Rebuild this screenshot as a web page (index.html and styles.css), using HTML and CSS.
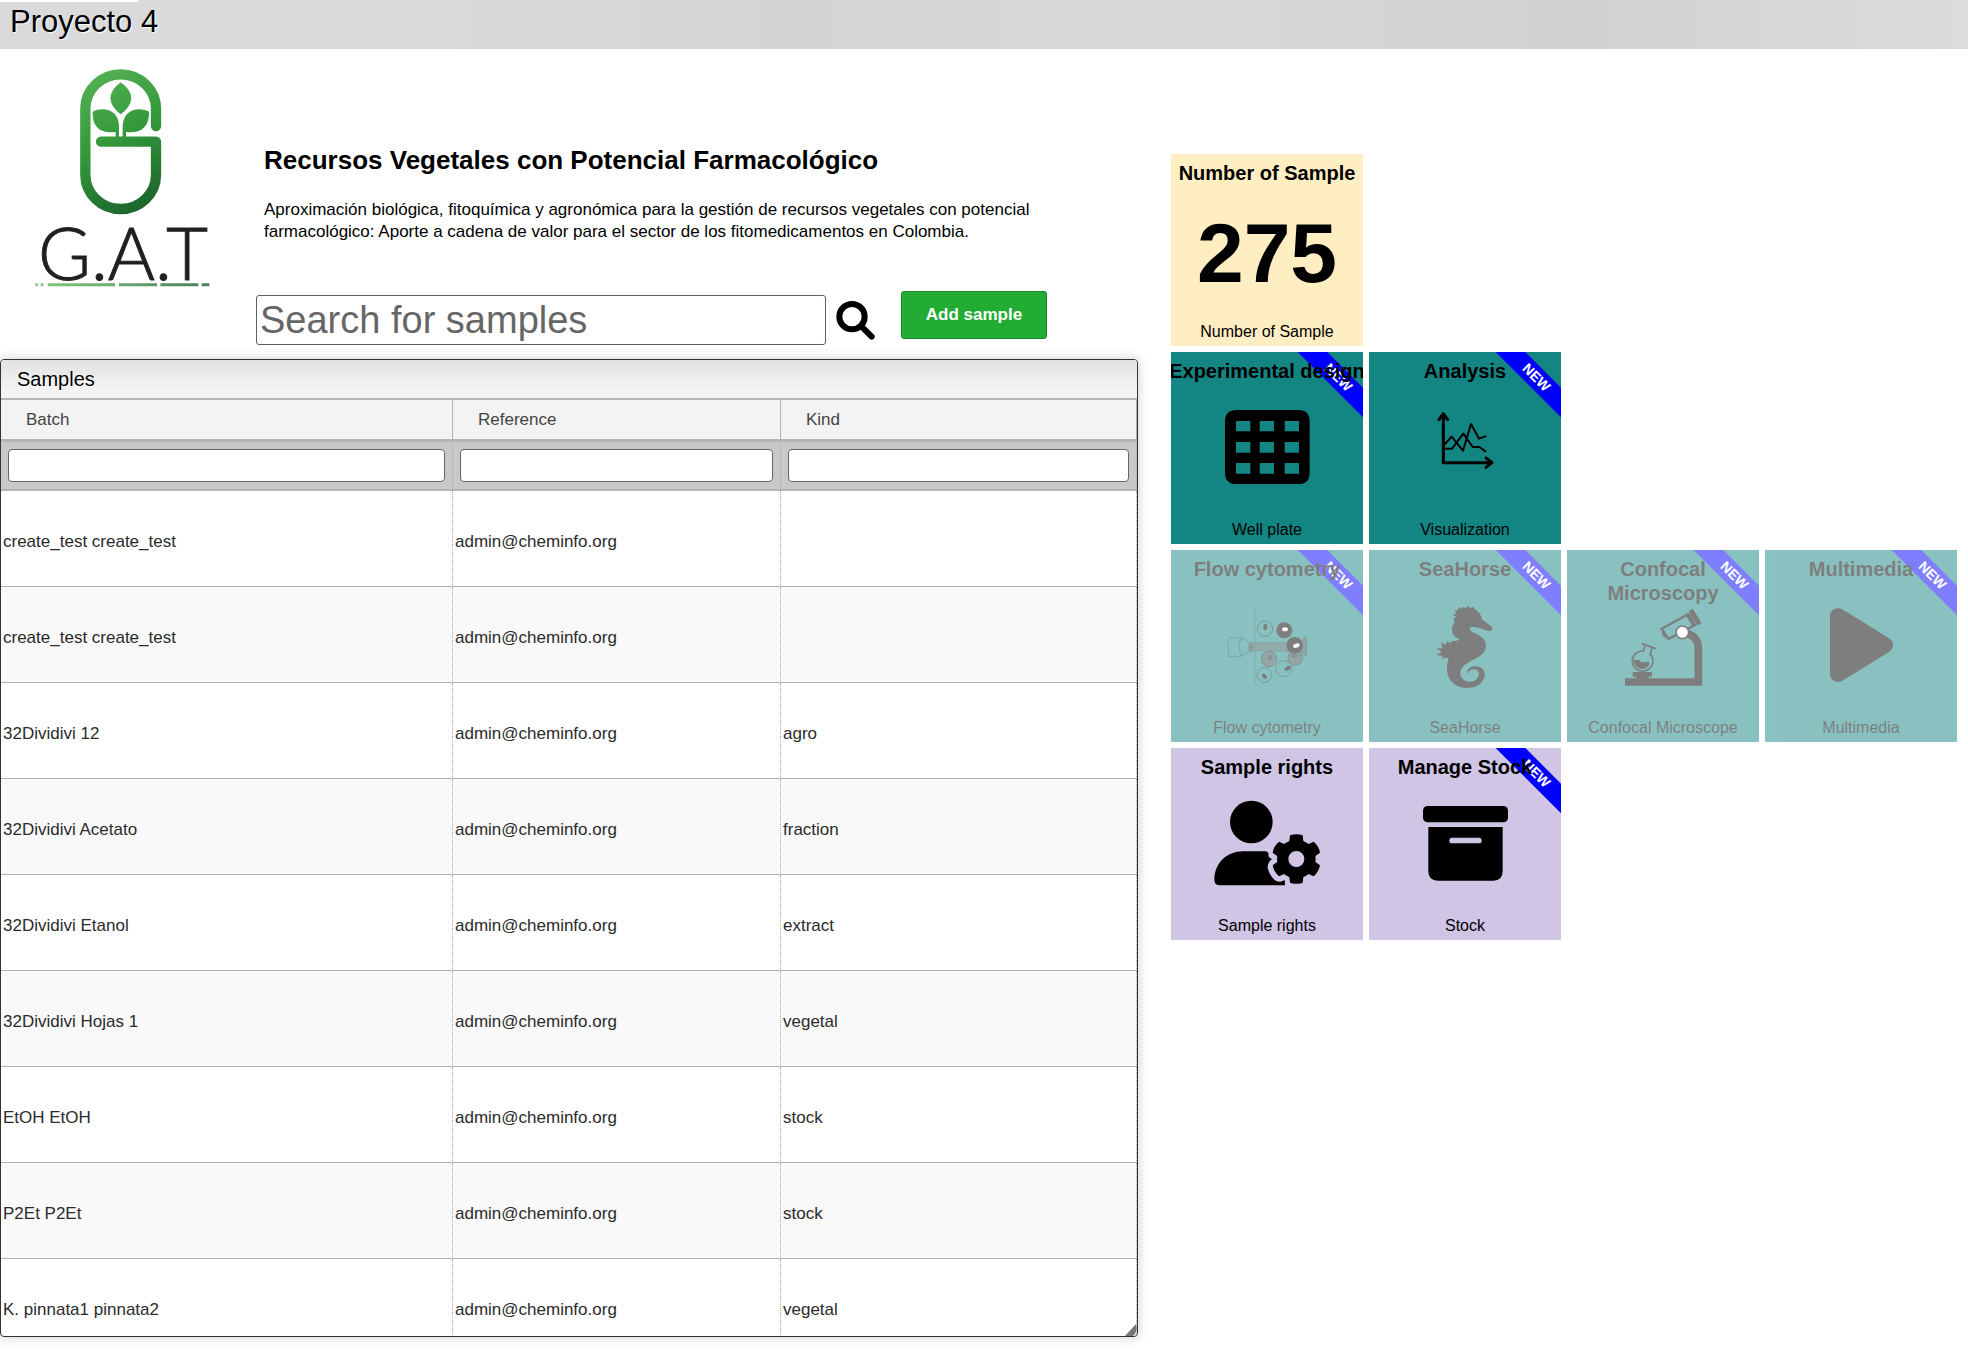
FILE: index.html
```html
<!DOCTYPE html>
<html lang="es">
<head>
<meta charset="utf-8">
<meta name="viewport" content="width=device-width, initial-scale=1">
<title>Proyecto 4</title>
<link rel="stylesheet" href="styles.css">
</head>
<body>
<header class="topbar">Proyecto 4</header>
<main class="page">
  <div class="left">
    <section class="intro">
      <svg class="logo" viewBox="0 0 600 750" role="img" aria-label="G.A.T">
        <defs>
          <linearGradient id="pill" gradientUnits="userSpaceOnUse" x1="190" y1="90" x2="400" y2="480">
            <stop offset="0" stop-color="#54b054"/><stop offset=".45" stop-color="#33993b"/><stop offset="1" stop-color="#1b602b"/>
          </linearGradient>
          <linearGradient id="rule" gradientUnits="userSpaceOnUse" x1="45" y1="704" x2="568" y2="704">
            <stop offset="0" stop-color="#86cb80"/><stop offset="1" stop-color="#4b8058"/>
          </linearGradient>
        </defs>
        <path d="M408 228V176A106 103 0 0 0 196 176V374A106 103 0 0 0 408 374V275H243" fill="none" stroke="url(#pill)" stroke-width="31" stroke-linecap="round" stroke-linejoin="round"/>
        <g fill="url(#pill)">
          <path d="M302 97Q333 119 334 145Q332 171 302 193Q273 171 271 145Q272 119 302 97Z"/>
          <path d="M218 185C250 169 296 178 297 228V262H287V246C240 251 216 230 218 185Z"/>
          <path d="M387 185C355 169 310 178 308 228V262H318V246C363 251 389 230 387 185Z"/>
        </g>
        <text class="logo-text" x="54" y="690">G.A.T</text>
        <path d="M46 704h8M62 704h8M83 704H285M297 704H411M421 704H535M545 704H568" stroke="url(#rule)" stroke-width="9"/>
      </svg>
      <div class="intro-body">
        <h1 class="intro-title">Recursos Vegetales con Potencial Farmacológico</h1>
        <p class="intro-text">Aproximación biológica, fitoquímica y agronómica para la gestión de recursos vegetales con potencial<br>farmacológico: Aporte a cadena de valor para el sector de los fitomedicamentos en Colombia.</p>
        <form class="search">
          <div class="search-group">
            <input class="search-input" type="search" placeholder="Search for samples" aria-label="Search for samples">
            <button class="search-button" type="button" aria-label="Search">
              <svg viewBox="48 57 117 117" width="39" height="39" fill="none" stroke="#000"><circle cx="96" cy="104" r="38" stroke-width="18"/><path d="M124 133L155 164" stroke-width="18" stroke-linecap="round"/></svg>
            </button>
          </div>
          <button class="add-button" type="button">Add sample</button>
        </form>
      </div>
    </section>

    <section class="panel">
      <h2 class="panel-title">Samples</h2>
      <div class="panel-body">
        <table class="samples">
          <colgroup><col class="col-batch"><col class="col-reference"><col></colgroup>
          <thead>
            <tr><th scope="col">Batch</th><th scope="col">Reference</th><th scope="col">Kind</th></tr>
            <tr class="filters">
              <td><input type="text" aria-label="Filter batch"></td>
              <td><input type="text" aria-label="Filter reference"></td>
              <td><input type="text" aria-label="Filter kind"></td>
            </tr>
          </thead>
          <tbody>
            <tr><td>create_test create_test</td><td>admin@cheminfo.org</td><td></td></tr>
            <tr><td>create_test create_test</td><td>admin@cheminfo.org</td><td></td></tr>
            <tr><td>32Dividivi 12</td><td>admin@cheminfo.org</td><td>agro</td></tr>
            <tr><td>32Dividivi Acetato</td><td>admin@cheminfo.org</td><td>fraction</td></tr>
            <tr><td>32Dividivi Etanol</td><td>admin@cheminfo.org</td><td>extract</td></tr>
            <tr><td>32Dividivi Hojas 1</td><td>admin@cheminfo.org</td><td>vegetal</td></tr>
            <tr><td>EtOH EtOH</td><td>admin@cheminfo.org</td><td>stock</td></tr>
            <tr><td>P2Et P2Et</td><td>admin@cheminfo.org</td><td>stock</td></tr>
            <tr><td>K. pinnata1 pinnata2</td><td>admin@cheminfo.org</td><td>vegetal</td></tr>
          </tbody>
        </table>
      </div>
      <svg class="grip" viewBox="0 0 12 12" width="12" height="12" aria-hidden="true"><path d="M0 12L11 0Q13 8 8 12Z" fill="#777"/></svg>
    </section>
  </div>

  <nav class="tiles" aria-label="Tools">
    <a class="tile tile-count row-start" href="#samples">
      <span class="tile-title">Number of Sample</span>
      <span class="tile-value">275</span>
      <span class="tile-footer">Number of Sample</span>
    </a>
    <a class="tile tile-tool row-start" href="#wellplate">
      <span class="ribbon">NEW</span>
      <span class="tile-title">Experimental design</span>
      <svg class="tile-icon" viewBox="141 801 360 246" aria-hidden="true"><path fill-rule="evenodd" d="M230 810H415Q449 810 449 844V998Q449 1032 415 1032H230Q195 1032 195 998V844Q195 810 230 810ZM228 843V874H271V843ZM299 843V874H342V843ZM374 843V874H417V843ZM228 906V938H271V906ZM299 906V938H342V906ZM374 906V938H417V906ZM228 969V1001H271V969ZM299 969V1001H342V969ZM374 969V1001H417V969Z"/></svg>
      <span class="tile-footer">Well plate</span>
    </a>
    <a class="tile tile-tool" href="#visualization">
      <span class="ribbon">NEW</span>
      <span class="tile-title">Analysis</span>
      <svg class="tile-icon" viewBox="735 801 360 246" fill="none" stroke="#000" stroke-linecap="round" stroke-linejoin="round" aria-hidden="true"><path stroke-width="9" d="M850 824V968H992M837 839L850 821L863 839M978 954L996 968L978 982"/><path stroke-width="6" d="M852 915L875 890L909 932L933 852L957 896L976 889M852 926H876L910 881L938 921H958L976 934"/></svg>
      <span class="tile-footer">Visualization</span>
    </a>
    <a class="tile tile-tool is-disabled row-start" href="#flow">
      <span class="ribbon">NEW</span>
      <span class="tile-title">Flow cytometry</span>
      <svg class="tile-icon" viewBox="141 195 360 246" fill="none" stroke="#000" aria-hidden="true">
        <path d="M285 204V435" stroke-width="6" stroke="#1e6e6c" opacity=".9"/>
        <path d="M272 309H430V333H272Z" fill="#2f4c4b" fill-opacity=".75" stroke-width="2" stroke-opacity=".5"/>
        <g stroke-width="3" stroke-opacity=".45"><path d="M207 293H242Q233 320 242 349H207Q200 320 207 293ZM242 293L272 310M242 349L272 333"/><ellipse cx="272" cy="321" rx="6" ry="12"/><ellipse cx="272" cy="321" rx="2" ry="5"/></g>
        <path d="M421 307L437 290Q443 320 438 346L423 335Z" fill="#25504f" stroke-opacity=".5" stroke-width="3"/>
        <g stroke-width="3" stroke-opacity=".6"><circle cx="315" cy="266" r="23"/><circle cx="313" cy="405" r="22"/><circle cx="371" cy="386" r="24"/><circle cx="327" cy="357" r="23" fill="#28504f"/><circle cx="406" cy="354" r="22" fill="#28504f"/></g>
        <g fill="#000" stroke="none"><ellipse cx="316" cy="261" rx="6" ry="10"/><ellipse cx="313" cy="409" rx="6" ry="9" transform="rotate(-40 313 409)"/><ellipse cx="383" cy="385" rx="6" ry="10" transform="rotate(55 383 385)"/><ellipse cx="330" cy="353" rx="6" ry="9" opacity=".5" transform="rotate(25 330 353)"/><ellipse cx="403" cy="348" rx="10" ry="6" opacity=".5"/><circle cx="373" cy="271" r="24"/><circle cx="404" cy="316" r="25"/></g>
        <g fill="#fff" stroke="none"><ellipse cx="375" cy="268" rx="9" ry="6"/><ellipse cx="409" cy="317" rx="10" ry="6" transform="rotate(-20 409 317)"/></g>
      </svg>
      <span class="tile-footer">Flow cytometry</span>
    </a>
    <a class="tile tile-tool is-disabled" href="#seahorse">
      <span class="ribbon">NEW</span>
      <span class="tile-title">SeaHorse</span>
      <svg class="tile-icon" viewBox="735 195 360 246" aria-hidden="true"><path d="M884 246L880 236L889 231L879 225L889 219L883 211L894 211L897 202L905 206L909 200L917 205L926 198L931 204L942 200L943 207C956 212 963 225 967 239Q984 250 995 261Q1001 271 989 273Q973 271 962 265Q945 260 932 261Q925 269 938 277C962 287 979 298 978 320C974 360 902 360 901 400C901 421 925 430 942 423C964 412 960 386 940 388Q927 390 922 403Q918 382 942 379C966 376 977 394 974 408C968 432 948 444 922 444C880 443 859 415 861 380Q862 366 866 355L852 353L845 359L848 347L828 345L846 337L829 325L847 325L843 307L857 314L862 303L870 310L876 302Q890 306 898 297C874 290 870 263 884 246Z"/></svg>
      <span class="tile-footer">SeaHorse</span>
    </a>
    <a class="tile tile-tool is-disabled" href="#confocal">
      <span class="ribbon">NEW</span>
      <span class="tile-title">Confocal Microscopy</span>
      <svg class="tile-icon" viewBox="144 195 360 246" fill="none" stroke="#000" aria-hidden="true">
        <path d="M390 279Q430 288 430 324V426H210" stroke-width="23"/>
        <path d="M320 266L399 223L419 256L340 297Z" stroke-width="7"/>
        <path d="M399 224L418 257" stroke-width="12"/><path d="M407 210L433 253" stroke-width="15"/><path d="M323 276L331 291" stroke-width="8"/>
        <circle cx="382" cy="277" r="19" fill="#fff" stroke-width="5"/>
        <path d="M261 311L302 326" stroke-width="6"/>
        <path d="M270 316L265 333A31 30 0 1 0 286 343L291 324" stroke-width="5"/>
        <path d="M234 359Q246 361 253 360Q260 370 270 365L285 367Q280 387 261 387Q239 385 234 359Z" fill="#000" stroke="none"/>
        <path d="M233 403H291M243 412H281" stroke-width="14"/>
      </svg>
      <span class="tile-footer">Confocal Microscope</span>
    </a>
    <a class="tile tile-tool is-disabled" href="#multimedia">
      <span class="ribbon">NEW</span>
      <span class="tile-title">Multimedia</span>
      <svg class="tile-icon" viewBox="738 195 360 246" aria-hidden="true"><path d="M825 228C825 208 845 199 862 208L1002 295C1018 305 1018 326 1002 336L862 422C845 432 825 421 825 402Z"/></svg>
      <span class="tile-footer">Multimedia</span>
    </a>
    <a class="tile tile-admin row-start" href="#rights">
      <span class="tile-title">Sample rights</span>
      <svg class="tile-icon" viewBox="141 789 360 246" aria-hidden="true">
        <circle cx="274" cy="846" r="64"/>
        <path d="M163 1020C163 970 200 934 249 934H316Q325 935 326 943Q322 951 336 957Q322 968 323 985Q328 1005 344 1020Q352 1027 362 1025L374 1020L375 1036H180Q163 1036 163 1020Z"/>
        <g transform="translate(409 957)"><circle r="41" fill="none" stroke="#000" stroke-width="34"/>
          <path id="tooth" d="M-22 -45L-19 -71Q0 -78 19 -71L22 -45Z"/><use href="#tooth" transform="rotate(60)"/><use href="#tooth" transform="rotate(120)"/><use href="#tooth" transform="rotate(180)"/><use href="#tooth" transform="rotate(240)"/><use href="#tooth" transform="rotate(300)"/></g>
      </svg>
      <span class="tile-footer">Sample rights</span>
    </a>
    <a class="tile tile-admin" href="#stock">
      <span class="ribbon">NEW</span>
      <span class="tile-title">Manage Stock</span>
      <svg class="tile-icon" viewBox="735 789 360 246" aria-hidden="true"><rect x="789" y="798" width="255" height="49" rx="14"/><path fill-rule="evenodd" d="M805 861H1028V994Q1028 1022 1000 1022H833Q805 1022 805 994ZM876 893Q868 893 868 902Q868 910 876 910H957Q965 910 965 902Q965 893 957 893Z"/></svg>
      <span class="tile-footer">Stock</span>
    </a>
  </nav>
</main>
</body>
</html>
```
FILE: styles.css
```css
* { box-sizing: border-box; }

body {
  margin: 0;
  height: 100vh;
  display: flex;
  flex-direction: column;
  background: #fff;
  color: #000;
  font-family: "Liberation Sans", Arial, sans-serif;
  font-size: 17px;
}

/* Top bar */
.topbar {
  position: relative;
  flex: none;
  height: 49px;
  padding-left: 10px;
  font-size: 31px;
  line-height: 43px;
  text-shadow: 1px 1px 1px #fff;
  background: linear-gradient(to right, #dadada 0%, #dadada 20%, #d4d4d4 40%, #d8d8d8 60%, #d1d1d1 80%, #dcdcdc 100%);
}
.topbar::before {
  content: "";
  position: absolute;
  top: 0;
  left: 0;
  width: 138px;
  height: 2px;
  background: #fff;
}

.page {
  flex: 1;
  min-height: 0;
  display: grid;
  grid-template-columns: minmax(0, 1fr) auto;
  grid-template-rows: minmax(0, 1fr);
  gap: 33px;
  padding-right: 11px;
}
.left {
  display: flex;
  flex-direction: column;
  min-height: 0;
  padding-bottom: 13px;
}

/* Project description */
.intro {
  flex: none;
  display: grid;
  grid-template-columns: 236px minmax(0, 1fr);
  padding: 0 0 14px 20px;
}
.logo {
  width: 200px;
  height: 250px;
  margin-top: 1px;
}
.logo-text {
  font-family: Lato, "Liberation Sans", sans-serif;
  font-size: 216px;
  font-weight: 300;
  fill: #231f20;
  stroke: #231f20;
  stroke-width: 3px;
}
.intro-body { padding-top: 96px; }
.intro-title {
  margin: 0 0 24px;
  padding-left: 8px;
  font-size: 26px;
  line-height: 30px;
}
.intro-text {
  margin: 0 0 48px;
  padding-left: 8px;
  line-height: 22px;
}
.search {
  display: flex;
  align-items: flex-start;
  gap: 26px;
}
.search-group {
  display: flex;
  align-items: center;
  gap: 10px;
  padding-top: 4px;
}
.search-input {
  width: 570px;
  height: 50px;
  padding: 0 3px;
  border: 1px solid #5f5f5f;
  border-radius: 3px;
  background: #fff;
  font: 38px "Liberation Sans", Arial, sans-serif;
  appearance: none;
}
.search-input::placeholder { color: #666; }
.search-button {
  display: flex;
  padding: 0;
  border: 0;
  background: none;
}
.add-button {
  width: 146px;
  height: 48px;
  border: 1px solid #1c8a2a;
  border-radius: 3px;
  background: #22ac33;
  color: #fff;
  font: bold 17px "Liberation Sans", Arial, sans-serif;
}

/* Samples panel */
.panel {
  position: relative;
  flex: 1;
  min-height: 0;
  display: flex;
  flex-direction: column;
  overflow: hidden;
  border: 1px solid #333;
  border-radius: 4px;
  box-shadow: 0 0 12px rgba(0, 0, 0, .2);
  background: #fff;
}
.panel-title {
  flex: none;
  margin: 0;
  padding-left: 16px;
  border-bottom: 2px solid #b5b5b5;
  background: linear-gradient(#e2e2e2, #f4f4f4 80%);
  font-size: 20px;
  font-weight: normal;
  line-height: 38px;
  text-shadow: 1px 1px 1px #fff;
}
.panel-body {
  flex: 1;
  min-height: 0;
  overflow: auto;
  scrollbar-width: none;
}
.samples {
  width: 100%;
  table-layout: fixed;
  border-collapse: separate;
  border-spacing: 0;
  color: #2b2b2b;
}
.col-batch { width: 452px; }
.col-reference { width: 328px; }
.samples th {
  height: 42px;
  padding: 0 0 0 25px;
  border-right: 1px solid #b0b0b0;
  border-bottom: 3px solid #b5b5b5;
  background: #f3f3f3;
  color: #444;
  font-weight: normal;
  text-align: left;
}
.samples td {
  height: 96px;
  padding: 6px 2px 0;
  border-right: 1px dotted #aaa;
  border-bottom: 1px solid #b0b0b0;
}
.samples tbody tr:nth-child(even) { background: #f9f9f9; }
.samples .filters td {
  height: 49px;
  padding: 0 7px;
  border-bottom: 2px solid #b5b5b5;
  background: #c8c8c8;
}
.filters input {
  display: block;
  width: 100%;
  height: 33px;
  border: 1px solid #666;
  border-radius: 4px;
  background: #fff;
  font: inherit;
}
.grip {
  position: absolute;
  right: 0;
  bottom: 0;
}

/* Tiles */
.tiles {
  display: grid;
  grid-template-columns: repeat(4, 192px);
  grid-auto-rows: 192px;
  align-content: start;
  gap: 6px;
  padding-top: 105px;
}
.row-start { grid-column-start: 1; }
.tile {
  position: relative;
  display: flex;
  flex-direction: column;
  align-items: center;
  overflow: hidden;
  padding: 7px 0 4px;
  color: #000;
  text-align: center;
  text-decoration: none;
}
.tile-count { background: #ffeec2; }
.tile-tool { background: #138583; }
.tile-admin { background: #d0c5e4; }
.is-disabled { opacity: .5; }
.tile-title {
  position: relative;
  z-index: 1;
  align-self: stretch;
  height: 48px;
  margin: 0 -3px;
  font-size: 20px;
  font-weight: bold;
  line-height: 24px;
}
.tile-value {
  font-size: 84px;
  font-weight: bold;
  line-height: 88px;
}
.tile-icon {
  width: 120px;
  height: 82px;
  overflow: visible;
}
.tile-footer {
  margin-top: auto;
  font-size: 16px;
  line-height: 20px;
}
.ribbon {
  position: absolute;
  top: 17px;
  right: -52px;
  width: 150px;
  padding-right: 5px;
  background: #00f;
  color: #fff;
  font-size: 14px;
  font-weight: bold;
  line-height: 21px;
  transform: rotate(45deg);
}
```
